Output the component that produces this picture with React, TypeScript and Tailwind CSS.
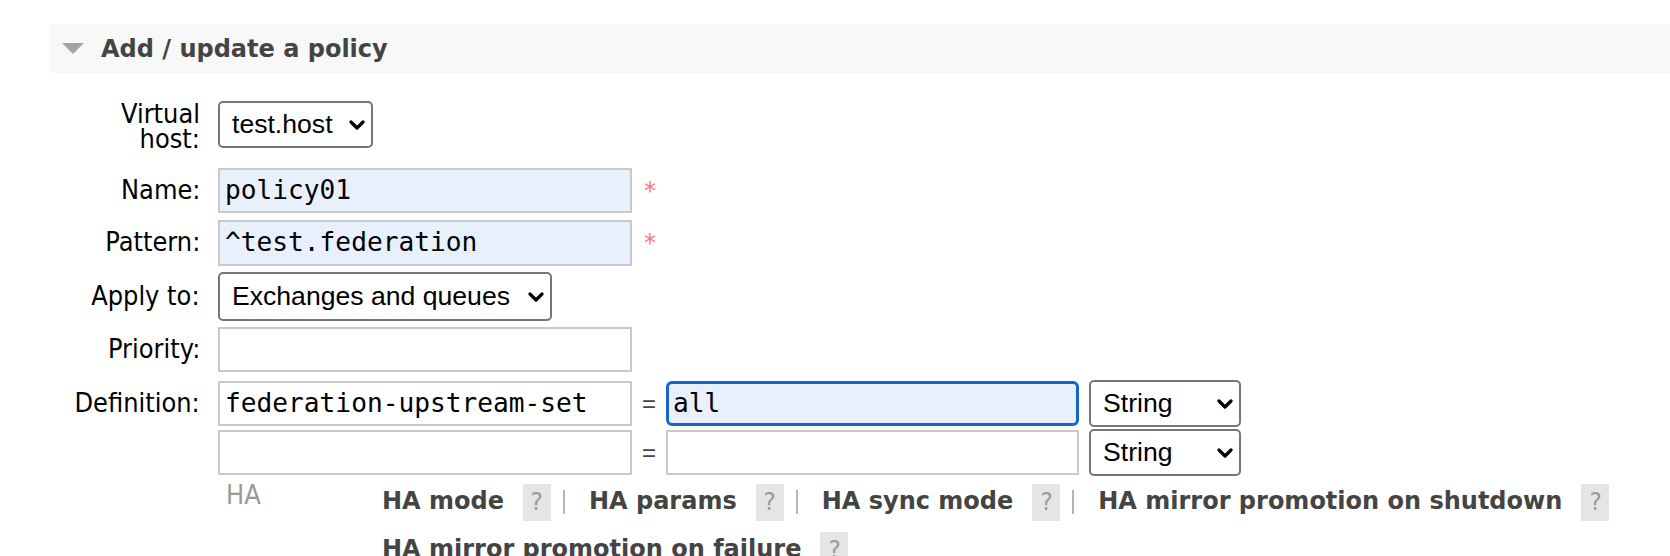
import React from 'react';

const monoFont = "font-['DejaVu_Sans_Mono',monospace]";
const cond = "inline-block scale-x-[0.93] font-['DejaVu_Sans',Verdana,sans-serif]";

function Chevron() {
  return (
    <svg width="16" height="10" viewBox="0 0 16 10" className="shrink-0">
      <path d="M2 2 L8 8 L14 2" fill="none" stroke="#000" strokeWidth="3.2" strokeLinecap="round" strokeLinejoin="round" />
    </svg>
  );
}

function FakeSelect({ value, className }: { value: string; className: string }) {
  return (
    <div
      className={`flex items-center justify-between border-2 border-[#767676] rounded-[5px] bg-white pl-[12px] pr-[6px] text-[26.6px] text-black font-['Liberation_Sans',Arial,sans-serif] ${className}`}
    >
      <span>{value}</span>
      <Chevron />
    </div>
  );
}

function TextBox({ value, className = '', filled = false }: { value?: string; className?: string; filled?: boolean }) {
  return (
    <div
      className={`flex items-center border-2 border-[#c9c9c9] pl-[5px] text-[26.2px] text-black ${monoFont} ${filled ? 'bg-[#e8f0fe]' : 'bg-white'} ${className}`}
    >
      {value}
    </div>
  );
}

function Row({
  label,
  children,
  className = '',
  labelClass = 'leading-[23.5px]',
}: {
  label?: React.ReactNode;
  children: React.ReactNode;
  className?: string;
  labelClass?: string;
}) {
  return (
    <div className={`flex items-center ${className}`}>
      <div className={`w-[150px] text-right text-[26px] text-black ${labelClass}`}>
        {label && <span className={`${cond} origin-right`}>{label}</span>}
      </div>
      <div className="ml-[18px] flex items-center">{children}</div>
    </div>
  );
}

function Help() {
  return (
    <span className="inline-flex items-center justify-center align-middle w-[28px] h-[37px] bg-[#e5e5e5] text-[#9a9a9a] text-[25px] font-normal ml-[19px]">
      <span className={cond}>?</span>
    </span>
  );
}

function Sep() {
  return <span className="inline-block align-middle w-[2px] h-[24px] bg-[#b5b5b5] ml-[12px] mr-[24px]" />;
}

function Star() {
  return <span className="ml-[12px] text-[24px] text-[#f77] leading-none">*</span>;
}

function Equals() {
  return <span className="mx-[10px] text-[24px] text-[#444] font-['Liberation_Sans',sans-serif]">=</span>;
}

export default function App() {
  return (
    <div className="bg-white min-h-[556px] pt-[24px] pl-[50px] font-['DejaVu_Sans',Verdana,sans-serif]">
      <div className="h-[49px] bg-[#f8f8f8] flex items-center">
        <svg width="22" height="11" viewBox="0 0 22 11" className="ml-[12px] mr-[17px]">
          <polygon points="0,0 22,0 11,11" fill="#a3a3a3" />
        </svg>
        <h2 className="text-[24px] font-bold text-[#444]">Add / update a policy</h2>
      </div>

      <div className="flex flex-col">
        <Row label={<>Virtual<br />host:</>} className="mt-[28px] h-[47px]" labelClass="leading-[25px] translate-y-[2px]">
          <FakeSelect value="test.host" className="w-[155px] h-[47px]" />
        </Row>
        <Row label="Name:" className="mt-[20px]">
          <TextBox value="policy01" filled className="w-[414px] h-[45px]" />
          <Star />
        </Row>
        <Row label="Pattern:" className="mt-[7px]">
          <TextBox value="^test.federation" filled className="w-[414px] h-[46px]" />
          <Star />
        </Row>
        <Row label="Apply to:" className="mt-[6px]">
          <FakeSelect value="Exchanges and queues" className="w-[334px] h-[49px]" />
        </Row>
        <Row label="Priority:" className="mt-[6px]">
          <TextBox className="w-[414px] h-[45px]" />
        </Row>
        <Row label="Definition:" className="mt-[8px]">
          <TextBox value="federation-upstream-set" className="w-[414px] h-[45px]" />
          <Equals />
          <div className={`flex items-center w-[413px] h-[45px] border-[3px] border-[#1764d1] rounded-[6px] bg-[#e8f0fe] pl-[4px] text-[26.2px] text-black ${monoFont}`}>
            all
          </div>
          <FakeSelect value="String" className="ml-[10px] w-[152px] h-[47px]" />
        </Row>
        <Row className="mt-[2px]">
          <TextBox className="w-[414px] h-[45px]" />
          <Equals />
          <TextBox className="w-[413px] h-[45px]" />
          <FakeSelect value="String" className="ml-[10px] w-[152px] h-[47px]" />
        </Row>

        <div className="flex mt-[8px]">
          <div className="ml-[176px] w-[156px] text-[26px] text-[#999] leading-[30px] -mt-[4px]">
            <span className={`${cond} origin-left`}>HA</span>
          </div>
          <div className="w-[1250px] text-[24px] font-bold text-[#444] leading-[48px] -mt-[7px]">
            <span className="whitespace-nowrap">HA mode<Help /></span>
            <Sep />
            <span className="whitespace-nowrap">HA params<Help /></span>
            <Sep />
            <span className="whitespace-nowrap">HA sync mode<Help /></span>
            <Sep />
            <span className="whitespace-nowrap">HA mirror promotion on shutdown<Help /></span>{' '}
            <span className="whitespace-nowrap">HA mirror promotion on failure<Help /></span>
          </div>
        </div>
      </div>
    </div>
  );
}
